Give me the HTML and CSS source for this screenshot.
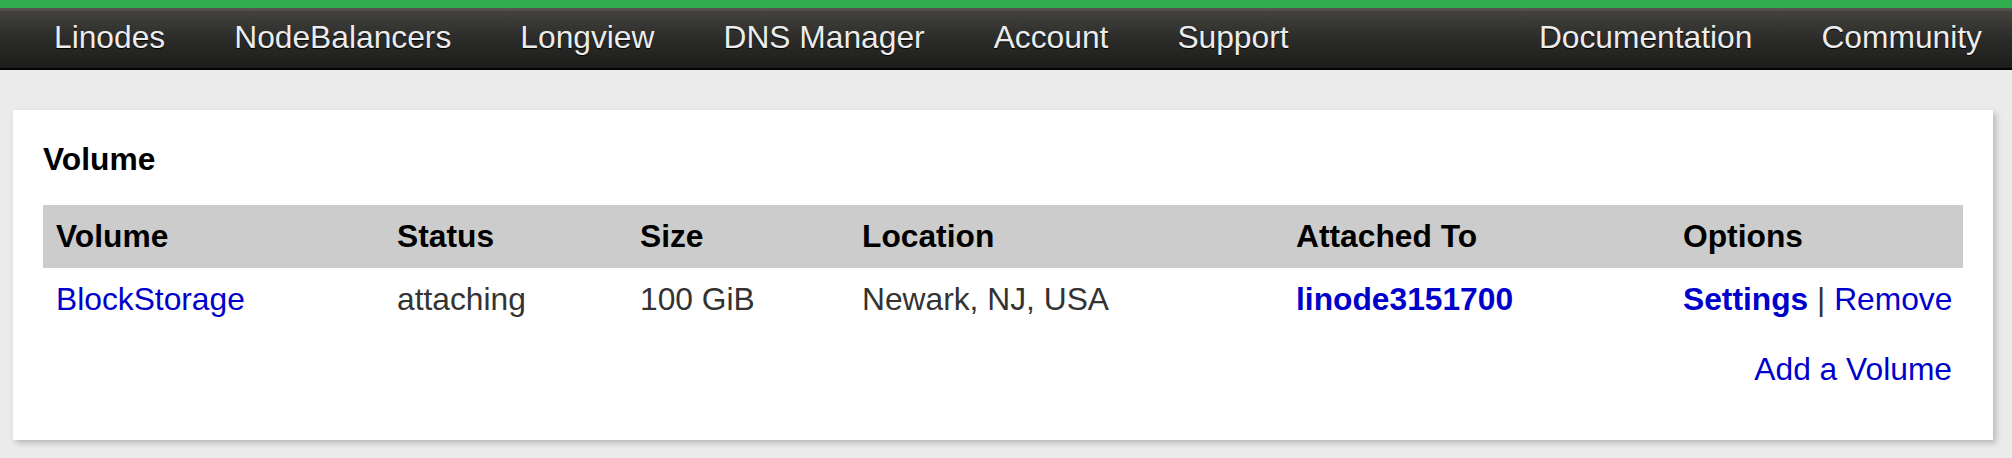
FILE: index.html
```html
<!DOCTYPE html>
<html lang="en">
<head>
<meta charset="utf-8">
<title>Volumes</title>
<link rel="stylesheet" href="styles.css">
</head>
<body>
<div class="topline"></div>
<nav class="nav">
  <ul class="nav-list">
    <li><a href="#">Linodes</a></li>
    <li><a href="#">NodeBalancers</a></li>
    <li><a href="#">Longview</a></li>
    <li><a href="#">DNS Manager</a></li>
    <li><a href="#">Account</a></li>
    <li><a href="#">Support</a></li>
  </ul>
  <ul class="nav-list">
    <li><a href="#">Documentation</a></li>
    <li><a href="#">Community</a></li>
  </ul>
</nav>
<main class="main">
  <section class="card">
    <h2 class="title">Volume</h2>
    <table class="vol-table">
      <colgroup>
        <col class="c-vol"><col class="c-status"><col class="c-size"><col class="c-loc"><col class="c-att"><col class="c-opt">
      </colgroup>
      <thead>
        <tr><th>Volume</th><th>Status</th><th>Size</th><th>Location</th><th>Attached To</th><th>Options</th></tr>
      </thead>
      <tbody>
        <tr>
          <td><a href="#">BlockStorage</a></td>
          <td>attaching</td>
          <td>100 GiB</td>
          <td>Newark, NJ, USA</td>
          <td><a href="#" class="strong">linode3151700</a></td>
          <td><a href="#" class="strong">Settings</a> | <a href="#">Remove</a></td>
        </tr>
      </tbody>
    </table>
    <div class="add"><a href="#">Add a Volume</a></div>
  </section>
</main>
</body>
</html>
```
FILE: styles.css
```css
html, body {
  margin: 0;
  padding: 0;
}
body {
  background: #ebebeb;
  font-family: "Liberation Sans", Arial, Helvetica, sans-serif;
  font-size: 31.75px;
  color: #333;
  width: 2012px;
  height: 458px;
  overflow: hidden;
}
a {
  color: #0000cc;
  text-decoration: none;
}
.topline {
  height: 8px;
  background: #31ad4f;
}
.nav {
  display: flex;
  justify-content: space-between;
  height: 60px;
  padding: 0 30px 0 54px;
  background: linear-gradient(#55544f 0, #55544f 2px, #43423e 3px, #2c2c2a 30px, #1c1c1c 60px);
  border-bottom: 2px solid #050505;
}
.nav-list {
  display: flex;
  gap: 69px;
  list-style: none;
  margin: 0;
  padding: 0;
}
.nav-list a {
  display: block;
  line-height: 58px;
  padding-bottom: 2px;
  color: #ececec;
  text-shadow: 0 1px 1px #000;
}
.main {
  padding: 40px 19px 0 13px;
}
.card {
  background: #fff;
  height: 330px;
  box-sizing: border-box;
  padding: 31px 30px 0 30px;
  box-shadow: 3px 3px 6px rgba(0, 0, 0, 0.22);
}
.title {
  margin: 0 0 28px 0;
  font-size: 31.75px;
  line-height: 36px;
  font-weight: bold;
  color: #000;
}
.vol-table {
  width: 1920px;
  border-collapse: collapse;
  table-layout: fixed;
}
.c-vol { width: 341px; }
.c-status { width: 243px; }
.c-size { width: 222px; }
.c-loc { width: 434px; }
.c-att { width: 387px; }
.c-opt { width: 293px; }
.vol-table th {
  background: #cccccc;
  color: #000;
  font-weight: bold;
  text-align: left;
  line-height: 36px;
  padding: 13px 0 14px 13px;
}
.vol-table td {
  line-height: 36px;
  padding: 13px 0 14px 13px;
  color: #333;
  white-space: nowrap;
}
.strong {
  font-weight: bold;
}
.add {
  text-align: right;
  padding-right: 11px;
  margin-top: 20px;
  line-height: 36px;
}
```
